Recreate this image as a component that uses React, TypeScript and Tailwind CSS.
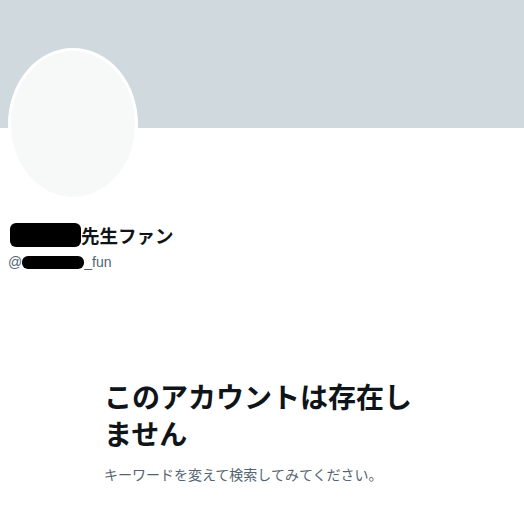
import React from 'react';

const jp = "font-['Noto_Sans_CJK_JP','Noto_Sans',sans-serif]";

const App: React.FC = () => {
  return (
    <div className={`w-[524px] h-[524px] bg-white overflow-hidden ${jp}`}>
      {/* banner */}
      <div className="h-[128px] bg-[#cfd9de]" />

      {/* avatar */}
      <div className="-mt-[80px] ml-[8px] w-[130px] h-[152px] rounded-[50%] border-[3px] border-white bg-[#f7f9f9]" />

      {/* name + handle */}
      <div className="mt-[22px] pl-[10px]">
        <div className="flex items-center h-[26px] text-[18.5px] font-bold text-[#0f1419] leading-[26px]">
          <span className="inline-block w-[71px] h-[24px] bg-black rounded-[6px]" />
          <span>先生ファン</span>
        </div>
        <div className="flex items-center -ml-[2px] mt-[4px] h-[20px] text-[14px] text-[#536471] font-['Liberation_Sans',sans-serif]">
          <span>@</span>
          <span className="inline-block w-[62px] h-[13px] bg-black rounded-[6px]" />
          <span>_fun</span>
        </div>
      </div>

      {/* not found message */}
      <div className="mt-[106px] mx-auto w-[316px]">
        <h2 className="text-[28px] font-bold leading-[37px] text-[#0f1419]">
          このアカウントは存在しません
        </h2>
        <p className="mt-[12px] text-[14px] leading-[20px] text-[#536471]">
          キーワードを変えて検索してみてください。
        </p>
      </div>
    </div>
  );
};

export default App;
